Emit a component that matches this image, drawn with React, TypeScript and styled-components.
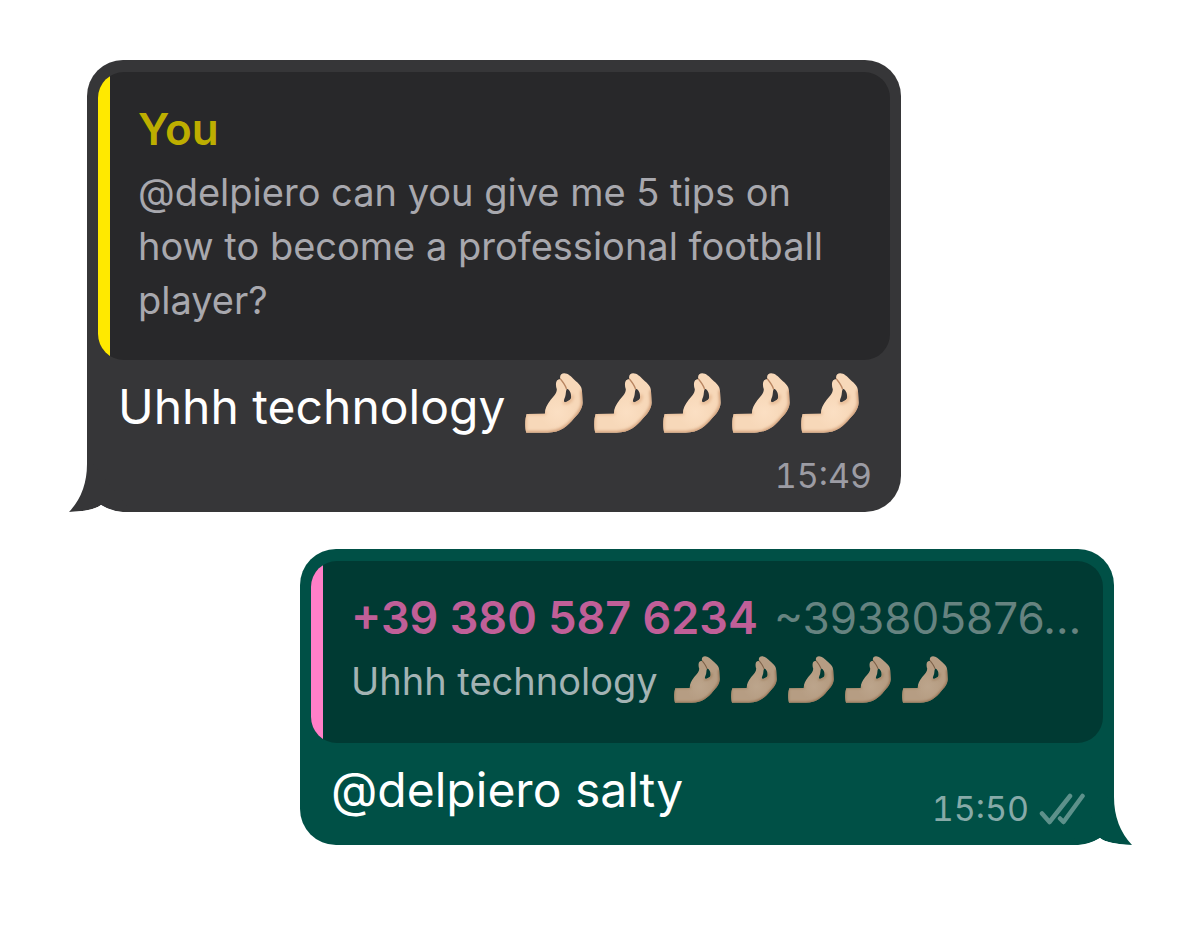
import React from "react";
import styled, { createGlobalStyle } from "styled-components";

const GlobalStyle = createGlobalStyle`
  *, *::before, *::after { box-sizing: border-box; }
  body {
    margin: 0;
    background: #ffffff;
    font-family: Inter, "Liberation Sans", sans-serif;
  }
`;

type Side = "incoming" | "outgoing";

const palette = {
  incoming: {
    bubble: "#363638",
    quote: "#28282a",
    bar: "#ffe900",
    name: "#bdae00",
    text: "#a8a8ae",
    time: "#9c9ca4",
  },
  outgoing: {
    bubble: "#005046",
    quote: "#003a33",
    bar: "#ff7fc8",
    name: "#c05f98",
    text: "#a3b3b4",
    time: "#87aaa8",
  },
};

const skin = {
  bright: { light: "#fbdfc3", base: "#f7d8b9", shade: "#e6b993", deep: "#cf9b74", line: "#b98561" },
  dim: { light: "#bca58c", base: "#b69d83", shade: "#a58767", deep: "#967252", line: "#7d6148" },
};

const Thread = styled.main`
  display: flex;
  flex-direction: column;
  gap: 37px;
  padding: 60px 87px;
`;

const Bubble = styled.article<{ $side: Side }>`
  position: relative;
  width: calc(100% - 213px);
  align-self: ${(p) => (p.$side === "incoming" ? "flex-start" : "flex-end")};
  padding: 12px 11px 18px;
  border-radius: 36px;
  background: ${(p) => palette[p.$side].bubble};
`;

const TailShape = styled.svg<{ $side: Side }>`
  position: absolute;
  bottom: 0;
  ${(p) => (p.$side === "incoming" ? "left: -18px;" : "right: -18px; transform: scaleX(-1);")}
  width: 58px;
  height: 48px;
`;

const Quote = styled.blockquote<{ $side: Side }>`
  display: flex;
  margin: 0;
  overflow: hidden;
  border-radius: 26px;
  background: ${(p) => palette[p.$side].quote};

  &::before {
    content: "";
    flex: none;
    width: 12px;
    background: ${(p) => palette[p.$side].bar};
  }
`;

const QuoteContent = styled.div<{ $side: Side }>`
  flex: 1;
  min-width: 0;
  padding: 32px 16px ${(p) => (p.$side === "incoming" ? "33px" : "35px")} 28px;
`;

const QuoteHeader = styled.header`
  display: flex;
  gap: 16px;
  margin-bottom: 11px;
  font-size: 44px;
  line-height: 50px;
`;

const Name = styled.strong<{ $side: Side }>`
  flex: none;
  font-size: ${(p) => (p.$side === "incoming" ? "44px" : "45px")};
  font-weight: 600;
  color: ${(p) => palette[p.$side].name};
`;

const Alias = styled.span`
  min-width: 0;
  white-space: nowrap;
  color: #668380;
`;

const QuoteText = styled.p<{ $side: Side }>`
  margin: 0;
  font-size: 38px;
  line-height: 54px;
  color: ${(p) => palette[p.$side].text};
`;

const Body = styled.div`
  display: flex;
  flex-wrap: wrap;
  align-items: flex-end;
  row-gap: 14px;
  padding: 16px 18px 0 20px;
`;

const Message = styled.p`
  margin: 0;
  padding-bottom: 6px;
  font-size: 48px;
  line-height: 62px;
  color: #ffffff;
`;

const Meta = styled.div`
  display: flex;
  align-items: center;
  gap: 10px;
  margin-left: auto;
`;

const Time = styled.time<{ $side: Side }>`
  font-size: 34px;
  font-variant-numeric: tabular-nums;
  line-height: 36px;
  color: ${(p) => palette[p.$side].time};
`;

const HandRow = styled.span<{ $small?: boolean }>`
  display: inline-flex;
  gap: 11px;
  margin: -6px 0 -6px 6px;
  vertical-align: ${(p) => (p.$small ? "-8px" : "-9px")};

  svg {
    display: block;
    width: ${(p) => (p.$small ? "46px" : "58px")};
    height: ${(p) => (p.$small ? "47px" : "60px")};
  }
`;

function Tail({ side }: { side: Side }) {
  return (
    <TailShape $side={side} viewBox="0 0 58 48" aria-hidden="true">
      <path d="M18 0H24L58 42V48H54Q42 47 32 41Q25 47 0 48Q18 29 18 0Z" fill={palette[side].bubble} />
      <path d="M0 48Q25 47 32 41Q42 47 54 48Z" fill="#ffffff" />
    </TailShape>
  );
}

function Hand({ id, tone }: { id: string; tone: keyof typeof skin }) {
  const c = skin[tone];
  const outline =
    "M47 166L102 165C102 149 108 138 119 124C130 111 138 103 138 92C134 82 134 66 142 64C145 62 148 63 149 62C145 52 152 45 160 45C172 45 180 54 190 63C206 77 213 82 214 98L216 132C215 150 204 164 190 178C172 200 150 220 110 221L46 221C41 205 42 180 47 166ZM168 91C164 101 166 108 163 115C160 122 158 128 161 130C165 132 169 128 173 126C180 124 182 119 181 112C181 102 175 92 168 91Z";
  return (
    <svg viewBox="42 44 175 178" preserveAspectRatio="none" aria-hidden="true">
      <defs>
        <radialGradient id={`${id}-palm`} gradientUnits="userSpaceOnUse" cx="140" cy="160" r="95">
          <stop offset="0" stopColor={c.light} />
          <stop offset="0.55" stopColor={c.base} />
          <stop offset="1" stopColor={c.base} />
        </radialGradient>
        <clipPath id={`${id}-clip`}>
          <path d={outline} clipRule="evenodd" />
        </clipPath>
        <filter id={`${id}-soft`} x="-20%" y="-20%" width="140%" height="140%">
          <feGaussianBlur stdDeviation="5" />
        </filter>
      </defs>
      <path fill={`url(#${id}-palm)`} fillRule="evenodd" d={outline} />
      <g clipPath={`url(#${id}-clip)`} fill="none" strokeLinecap="round">
        <g filter={`url(#${id}-soft)`}>
          <path
            d="M216 100L218 132C217 150 206 164 192 180C174 202 150 223 110 223L42 223"
            stroke={c.deep}
            strokeWidth="12"
          />
          <path d="M46 163L102 163M42 168V218M160 132C174 133 184 126 184 112" stroke={c.shade} strokeWidth="10" />
        </g>
        <path d="M149 62C158 73 164 80 167 91" stroke={c.line} strokeWidth="4" />
      </g>
    </svg>
  );
}

function Hands({ id, small }: { id: string; small?: boolean }) {
  return (
    <HandRow $small={small} role="img" aria-label="Pinched fingers, five times">
      {[1, 2, 3, 4, 5].map((n) => (
        <Hand key={n} id={`${id}-${n}`} tone={small ? "dim" : "bright"} />
      ))}
    </HandRow>
  );
}

function ReadTicks() {
  return (
    <svg width="46" height="32" viewBox="1 0 46 32" fill="none" aria-hidden="true">
      <g stroke="#5d918b" strokeWidth="4.5" strokeLinecap="round" strokeLinejoin="round">
        <path d="M4 20.5L11.5 29L32 3" />
        <path d="M22 25.5L25.5 29L44.5 3" />
      </g>
    </svg>
  );
}

export default function App() {
  return (
    <>
      <GlobalStyle />
      <Thread>
        <Bubble $side="incoming">
          <Tail side="incoming" />
          <Quote $side="incoming">
            <QuoteContent $side="incoming">
              <QuoteHeader>
                <Name $side="incoming">You</Name>
              </QuoteHeader>
              <QuoteText $side="incoming">
                @delpiero can you give me 5 tips on how to become a professional football player?
              </QuoteText>
            </QuoteContent>
          </Quote>
          <Body>
            <Message>
              Uhhh technology <Hands id="sent" />
            </Message>
            <Meta>
              <Time $side="incoming" dateTime="15:49">
                15:49
              </Time>
            </Meta>
          </Body>
        </Bubble>

        <Bubble $side="outgoing">
          <Tail side="outgoing" />
          <Quote $side="outgoing">
            <QuoteContent $side="outgoing">
              <QuoteHeader>
                <Name $side="outgoing">+39 380 587 6234</Name>
                <Alias>~393805876…</Alias>
              </QuoteHeader>
              <QuoteText $side="outgoing">
                Uhhh technology <Hands id="quoted" small />
              </QuoteText>
            </QuoteContent>
          </Quote>
          <Body>
            <Message>@delpiero salty</Message>
            <Meta>
              <Time $side="outgoing" dateTime="15:50">
                15:50
              </Time>
              <ReadTicks />
            </Meta>
          </Body>
        </Bubble>
      </Thread>
    </>
  );
}
